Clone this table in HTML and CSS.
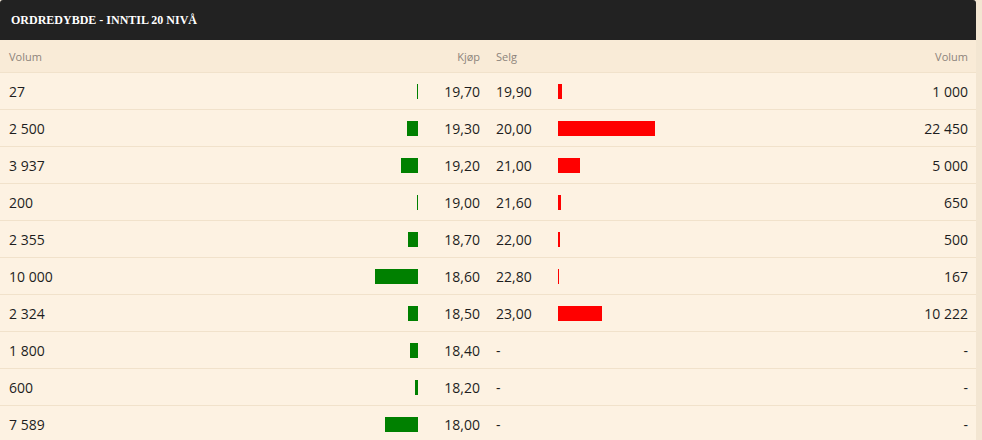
FILE: index.html
```html
<!DOCTYPE html>
<html>
<head>
    <link rel="stylesheet" href="styles.css">
</head>
<body>
    <div class="panel">
        <div class="panel-title">Ordredybde - inntil 20 nivå</div>
        <table class="depth">
            <colgroup>
                <col class="c-vol"><col class="c-bar"><col class="c-price"><col class="c-price"><col class="c-bar"><col class="c-vol">
            </colgroup>
            <thead>
                <tr>
                    <th class="left">Volum</th>
                    <th></th>
                    <th class="right">Kjøp</th>
                    <th class="left">Selg</th>
                    <th></th>
                    <th class="right">Volum</th>
                </tr>
            </thead>
            <tbody>
                <tr>
                    <td>27</td>
                    <td class="bid-bar"><span class="bar buy" style="width:1px"></span></td>
                    <td class="right">19,70</td>
                    <td>19,90</td>
                    <td class="ask-bar"><span class="bar sell" style="width:4px"></span></td>
                    <td class="right">1&nbsp;000</td>
                </tr>
                <tr>
                    <td>2&nbsp;500</td>
                    <td class="bid-bar"><span class="bar buy" style="width:11px"></span></td>
                    <td class="right">19,30</td>
                    <td>20,00</td>
                    <td class="ask-bar"><span class="bar sell" style="width:97px"></span></td>
                    <td class="right">22&nbsp;450</td>
                </tr>
                <tr>
                    <td>3&nbsp;937</td>
                    <td class="bid-bar"><span class="bar buy" style="width:17px"></span></td>
                    <td class="right">19,20</td>
                    <td>21,00</td>
                    <td class="ask-bar"><span class="bar sell" style="width:22px"></span></td>
                    <td class="right">5&nbsp;000</td>
                </tr>
                <tr>
                    <td>200</td>
                    <td class="bid-bar"><span class="bar buy" style="width:1px"></span></td>
                    <td class="right">19,00</td>
                    <td>21,60</td>
                    <td class="ask-bar"><span class="bar sell" style="width:3px"></span></td>
                    <td class="right">650</td>
                </tr>
                <tr>
                    <td>2&nbsp;355</td>
                    <td class="bid-bar"><span class="bar buy" style="width:10px"></span></td>
                    <td class="right">18,70</td>
                    <td>22,00</td>
                    <td class="ask-bar"><span class="bar sell" style="width:2px"></span></td>
                    <td class="right">500</td>
                </tr>
                <tr>
                    <td>10&nbsp;000</td>
                    <td class="bid-bar"><span class="bar buy" style="width:43px"></span></td>
                    <td class="right">18,60</td>
                    <td>22,80</td>
                    <td class="ask-bar"><span class="bar sell" style="width:1px"></span></td>
                    <td class="right">167</td>
                </tr>
                <tr>
                    <td>2&nbsp;324</td>
                    <td class="bid-bar"><span class="bar buy" style="width:10px"></span></td>
                    <td class="right">18,50</td>
                    <td>23,00</td>
                    <td class="ask-bar"><span class="bar sell" style="width:44px"></span></td>
                    <td class="right">10&nbsp;222</td>
                </tr>
                <tr>
                    <td>1&nbsp;800</td>
                    <td class="bid-bar"><span class="bar buy" style="width:8px"></span></td>
                    <td class="right">18,40</td>
                    <td>-</td>
                    <td class="ask-bar"></td>
                    <td class="right">-</td>
                </tr>
                <tr>
                    <td>600</td>
                    <td class="bid-bar"><span class="bar buy" style="width:3px"></span></td>
                    <td class="right">18,20</td>
                    <td>-</td>
                    <td class="ask-bar"></td>
                    <td class="right">-</td>
                </tr>
                <tr>
                    <td>7&nbsp;589</td>
                    <td class="bid-bar"><span class="bar buy" style="width:33px"></span></td>
                    <td class="right">18,00</td>
                    <td>-</td>
                    <td class="ask-bar"></td>
                    <td class="right">-</td>
                </tr>
            </tbody>
        </table>
    </div>
</body>
</html>
```

FILE: styles.css
```css
body {
  margin: 0;
  background: #f3e6d2;
  font-family: "Open Sans", "Noto Sans", sans-serif;
}

.panel {
  width: 976px;
  background: #fdf2e2;
}

.panel-title {
  height: 40px;
  line-height: 40px;
  padding-left: 11px;
  background: #222222;
  color: #ffffff;
  border-radius: 3px 3px 0 0;
  font-family: "Liberation Serif", "DejaVu Serif", serif;
  font-weight: bold;
  font-size: 12px;
  text-transform: uppercase;
}

.depth {
  width: 976px;
  table-layout: fixed;
  border-collapse: collapse;
}
.c-vol, .c-bar {
  width: 213px;
}
.c-price {
  width: 62px;
}

.depth th {
  height: 32px;
  padding: 0 8px;
  background: #f9ebd7;
  color: #8d847b;
  font-size: 11px;
  font-weight: normal;
  border-bottom: 1px solid #f1e2cb;
}

.depth td {
  height: 36px;
  padding: 0 8px;
  color: #1e1e1e;
  font-size: 14px;
  text-align: left;
  border-bottom: 1px solid #f1e2cb;
}

.depth th:first-child, .depth td:first-child {
  padding-left: 9px;
}

.left {
  text-align: left;
}
.depth .right {
  text-align: right;
}

.depth .bid-bar {
  text-align: right;
  line-height: 0;
}
.depth .ask-bar {
  text-align: left;
  line-height: 0;
}

.bar {
  display: inline-block;
  height: 15px;
  vertical-align: middle;
}
.bar.buy {
  background: #008000;
}
.bar.sell {
  background: #ff0000;
}
```
